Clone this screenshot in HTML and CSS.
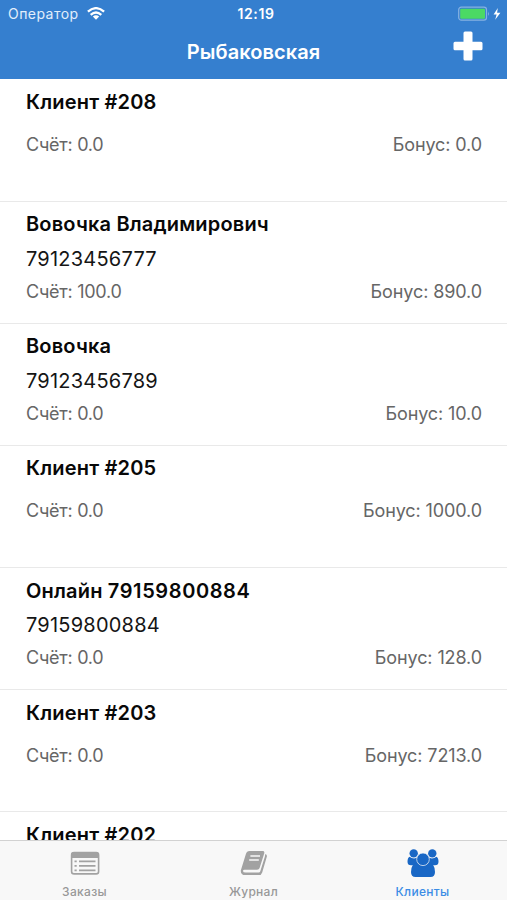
FILE: index.html
```
<!DOCTYPE html>
<html lang="ru">
<head>
<meta charset="utf-8">
<title>Рыбаковская</title>
<link rel="stylesheet" href="styles.css">
</head>
<body>
<div class="app">
  <header class="header">
    <div class="status">
      <div class="carrier"><span>Оператор</span>
        <svg class="wifi" viewBox="0 0 18 13"><g fill="none" stroke="#fff" stroke-width="2.3"><path d="M.9 4.7Q9-2.4 17.1 4.7"/><path d="M3.7 7.8Q9 3.1 14.3 7.8"/></g><path fill="#fff" d="M5.800 9.500Q9 6.800 12.200 9.500L9 12.800z"/></svg>
      </div>
      <time class="clock">12:19</time>
      <div class="power">
        <svg class="battery" viewBox="0 0 44 16"><rect x=".7" y="1.2" width="27.8" height="13" rx="2.6" fill="none" stroke="#86b2e2" stroke-width="1.2"/><rect x="2.2" y="2.7" width="24.8" height="10" rx="1" fill="#4bd964"/><path d="M30 5.500q1.800 2.200 0 4.400z" fill="#86b2e2"/><path d="M39.800 2L35.600 8.600h3L37.200 13.800 42.400 6.800h-3.300z" fill="#fff"/></svg>
      </div>
    </div>
    <div class="nav">
      <h1>Рыбаковская</h1>
      <svg class="plus" viewBox="0 0 30 30"><path fill="#fff" d="M12 .5h6q1.500 0 1.500 1.500v8.800H28q1.500 0 1.500 1.500v5.500q0 1.500-1.500 1.500h-8.500V28q0 1.500-1.500 1.500h-6q-1.500 0-1.500-1.500v-8.700H2q-1.500 0-1.500-1.500v-5.500q0-1.500 1.500-1.500h8.500V2Q10.500.5 12 .5z"/></svg>
    </div>
  </header>
  <main class="list">
    <article class="client"><h2>Клиент #208</h2><div class="sums"><span>Счёт: 0.0</span><span>Бонус: 0.0</span></div></article>
    <article class="client"><h2>Вовочка Владимирович</h2><p>79123456777</p><div class="sums"><span>Счёт: 100.0</span><span>Бонус: 890.0</span></div></article>
    <article class="client"><h2>Вовочка</h2><p>79123456789</p><div class="sums"><span>Счёт: 0.0</span><span>Бонус: 10.0</span></div></article>
    <article class="client"><h2>Клиент #205</h2><div class="sums"><span>Счёт: 0.0</span><span>Бонус: 1000.0</span></div></article>
    <article class="client"><h2>Онлайн <span class="digits">79159800884</span></h2><p>79159800884</p><div class="sums"><span>Счёт: 0.0</span><span>Бонус: 128.0</span></div></article>
    <article class="client"><h2>Клиент #203</h2><div class="sums"><span>Счёт: 0.0</span><span>Бонус: 7213.0</span></div></article>
    <article class="client"><h2>Клиент #202</h2><div class="sums"><span>Счёт: 0.0</span><span>Бонус: 0.0</span></div></article>
  </main>
  <nav class="tabs">
    <a class="tab"><svg viewBox="0 0 34 28"><rect x="3.600" y="3.600" width="27" height="21.300" rx="2.500" fill="#f8f8f8" stroke="#a2a2a2" stroke-width="1.600"/><path d="M3 9V6q0-3 3-3h22q3 0 3 3v3z" fill="#a2a2a2"/><path d="M11 12.300h16.500M11 16.800h16.500M11 21.300h16.500M6.500 12.300h2.200M6.500 16.800h2.200M6.500 21.300h2.200" stroke="#a2a2a2" stroke-width="1.700"/></svg><span>Заказы</span></a>
    <a class="tab"><svg viewBox="0 0 34 28"><path fill="#a2a2a2" d="M12.600 2h13q2.300 0 1.600 2.400l-4.600 14.500q-.5 1.800-2.600 1.800H7.500q-1.500 0-1.500 1.200 0 1.700 2.600 1.700h13q1.300 0 1.700-1.400L27.900 7.500l.4-2.500q2.100.7 1.500 2.800l-4.600 15.600q-.8 2.700-3.400 2.700H8.200q-4.700 0-4.400-4.700L8.900 5q.8-3 3.700-3z"/><path d="M13.400 7.100h9.600M12.200 11h9.600" stroke="#f8f8f8" stroke-width="1.500"/></svg><span>Журнал</span></a>
    <a class="tab active"><svg viewBox="0 0 34 28"><g fill="#1967c5"><circle cx="7.700" cy="4.400" r="4.200"/><circle cx="26.300" cy="4.400" r="4.200"/><path d="M3.500 7.800q4.200 3 8.400.5v8H5q-3.500 0-3.500-3.500 0-4 2-5zM30.500 7.800q-4.200 3-8.400.5v8H29q3.500 0 3.500-3.500 0-4-2-5z"/></g><path d="M11.300 14q5.700 4 11.400 0 6.300.5 6.300 9 0 5-4.500 5h-15Q5 28 5 23q0-8.500 6.300-9z" fill="#1967c5"/><circle cx="17" cy="10.300" r="6.300" fill="#1967c5" stroke="#f8f8f8" stroke-width=".7"/></svg><span>Клиенты</span></a>
  </nav>
</div>
</body>
</html>
```
FILE: styles.css
```
* { box-sizing: border-box; margin: 0; padding: 0; }
body { background: #fff; font-family: Inter, "Liberation Sans", sans-serif; }
.app { display: flex; flex-direction: column; width: 507px; height: 900px; overflow: hidden; }
.header { flex: none; height: 79px; background: #357fcf; color: #fff; }
.status { display: grid; grid-template-columns: 1fr auto 1fr; align-items: center; height: 28px; padding: 0 5px 0 8px; }
.carrier { display: flex; align-items: center; gap: 8px; color: #e2eefb; font-size: 14px; line-height: 16px; letter-spacing: .45px; }
.carrier span { margin-top: -1px; }
.wifi { width: 18px; height: 13px; margin-top: -2px; }
.clock { font-size: 14px; line-height: 16px; font-weight: 600; letter-spacing: .65px; padding-left: 2px; }
.power { display: flex; justify-content: flex-end; margin-top: -1px; }
.battery { width: 44px; height: 16px; }
.nav { display: grid; grid-template-columns: 1fr auto 1fr; height: 51px; padding: 0 24px; }
.nav h1 { grid-column: 2; font-size: 20px; line-height: 24px; font-weight: 600; margin-top: 12px; letter-spacing: .07px; }
.plus { justify-self: end; width: 30px; height: 30px; margin-top: 3px; }
.list { flex: 1; min-height: 0; overflow: hidden; padding-top: .5px; }
.client { height: 122.170px; padding: 9.400px 25px 0 26px; border-bottom: 1px solid #e9e9e9; }
.client h2 { font-size: 20px; line-height: 26px; font-weight: 600; letter-spacing: .18px; color: #080808; }
.client .digits { letter-spacing: .6px; }
.client p { font-size: 20px; line-height: 26px; margin-top: 8.600px; letter-spacing: .22px; color: #151515; }
.sums { display: flex; justify-content: space-between; font-size: 18px; line-height: 24px; letter-spacing: -.1px; color: #666; margin-top: 18px; }
.sums span:first-child { letter-spacing: -.25px; }
p + .sums { margin-top: 8px; }
.tabs { flex: none; display: grid; grid-template-columns: repeat(3, 1fr); height: 60px; background: #f8f8f8; border-top: 1px solid #d2d2d2; }
.tab { display: flex; flex-direction: column; align-items: center; padding-top: 8px; color: #989898; font-size: 12px; line-height: 14px; font-weight: 500; letter-spacing: .3px; }
.tab svg { width: 34px; height: 28px; margin-bottom: 8px; }
.active { color: #3b8ce5; }
```
